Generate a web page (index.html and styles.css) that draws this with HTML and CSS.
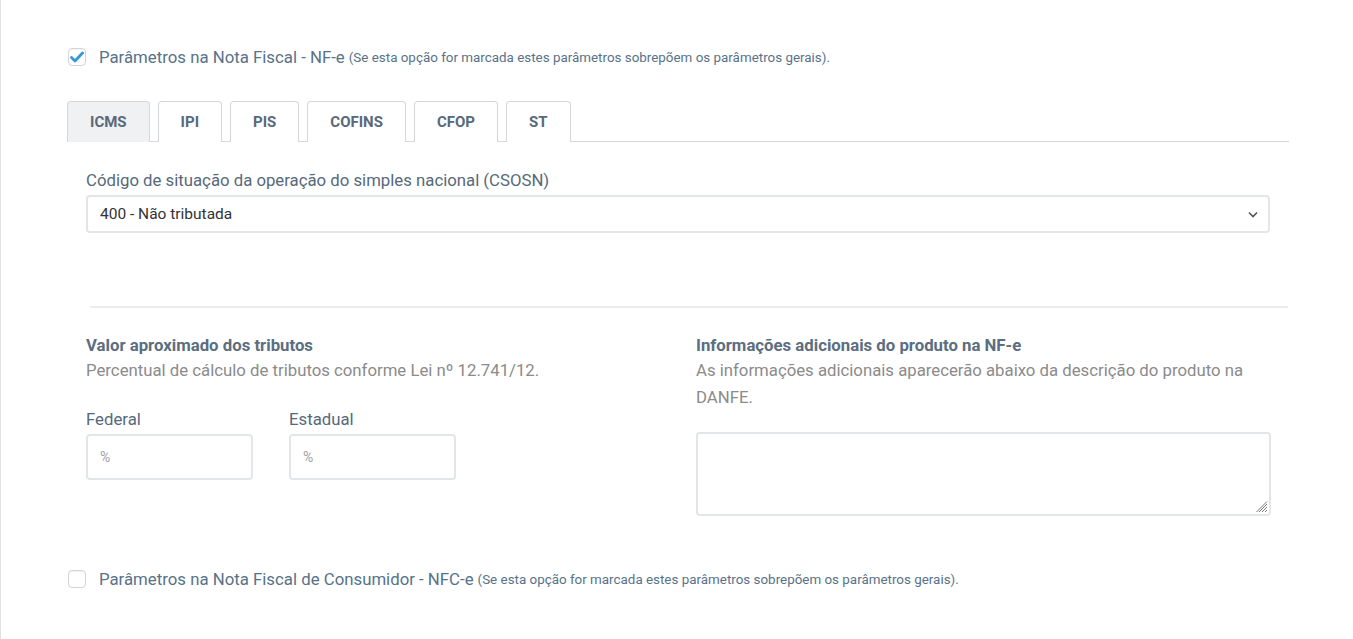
FILE: index.html
```html
<!DOCTYPE html>
<html lang="pt-BR">
<head>
    <meta charset="UTF-8">
    <meta name="viewport" content="width=device-width, initial-scale=1.0">
    <title>Parâmetros fiscais</title>
    <link rel="stylesheet" href="styles.css">
</head>
<body>
    <div class="page">
        <label class="check-row">
            <span class="checkbox checked">
                <svg width="14" height="12" viewBox="0 0 14 12"><path d="M1.5 6.5 L5 10 L12.5 2" fill="none" stroke="#3597d8" stroke-width="2.8" stroke-linecap="round" stroke-linejoin="round"/></svg>
            </span>
            <span class="check-text">Parâmetros na Nota Fiscal - NF-e</span>
            <small class="check-hint">(Se esta opção for marcada estes parâmetros sobrepõem os parâmetros gerais).</small>
        </label>

        <div class="tabs">
            <div class="tab active">ICMS</div>
            <div class="tab">IPI</div>
            <div class="tab">PIS</div>
            <div class="tab">COFINS</div>
            <div class="tab">CFOP</div>
            <div class="tab">ST</div>
        </div>

        <div class="tab-body">
            <div class="field">
                <label class="field-label">Código de situação da operação do simples nacional (CSOSN)</label>
                <div class="select">
                    <span>400 - Não tributada</span>
                    <svg width="10" height="7" viewBox="0 0 10 7"><path d="M1 1.5 L5 5.5 L9 1.5" fill="none" stroke="#555" stroke-width="1.6"/></svg>
                </div>
            </div>
        </div>

        <hr class="divider">

        <div class="cols">
            <div class="col">
                <h4 class="sec-title">Valor aproximado dos tributos</h4>
                <p class="sec-desc">Percentual de cálculo de tributos conforme Lei nº 12.741/12.</p>
                <div class="pct-row">
                    <div class="pct">
                        <label class="field-label">Federal</label>
                        <input type="text" class="txt" placeholder="%">
                    </div>
                    <div class="pct">
                        <label class="field-label">Estadual</label>
                        <input type="text" class="txt" placeholder="%">
                    </div>
                </div>
            </div>
            <div class="col">
                <h4 class="sec-title">Informações adicionais do produto na NF-e</h4>
                <p class="sec-desc">As informações adicionais aparecerão abaixo da descrição do produto na DANFE.</p>
                <div class="area-wrap">
                    <textarea class="area"></textarea>
                    <svg class="grip" width="12" height="12" viewBox="0 0 12 12"><path d="M11 3 L3 11 M11 6 L6 11 M11 9 L9 11 M11 0.5 L0.5 11" stroke="#777" stroke-width="1"/></svg>
                </div>
            </div>
        </div>

        <label class="check-row bottom">
            <span class="checkbox"></span>
            <span class="check-text">Parâmetros na Nota Fiscal de Consumidor - NFC-e</span>
            <small class="check-hint">(Se esta opção for marcada estes parâmetros sobrepõem os parâmetros gerais).</small>
        </label>
    </div>
</body>
</html>
```

FILE: styles.css
```css
body{
    margin: 0;
    font-family: Roboto, "Noto Sans", Arial, sans-serif;
    background: #fff;
    color: #5d6f80;
}
.page{
    border-left: 1px solid #e2e2e2;
    min-height: 639px;
    box-sizing: border-box;
    padding: 48px 64px 0 66px;
}
.check-row{
    display: flex;
    align-items: center;
    gap: 13px;
    height: 18px;
    margin-left: 1px;
}
.checkbox{
    width: 18px;
    height: 18px;
    box-sizing: border-box;
    border: 1px solid #d2d4d7;
    border-radius: 4px;
    display: flex;
    align-items: center;
    justify-content: center;
    background: #fff;
    box-shadow: inset 0 1px 1px rgb(0 0 0 / 5%);
}
.check-text{
    font-size: 16.8px;
    color: #587288;
}
.check-hint{
    font-size: 13.4px;
    color: #587288;
    margin-left: -9px;
}
.tabs{
    display: flex;
    gap: 8px;
    margin-top: 35px;
    border-bottom: 1px solid #d6d6d6;
}
.tab{
    height: 40px;
    line-height: 40px;
    padding: 0 22px;
    border: 1px solid #d6d6d6;
    border-bottom: none;
    border-radius: 4px 4px 0 0;
    font-size: 15px;
    font-weight: 700;
    color: #58697b;
    background: #fff;
    margin-bottom: -1px;
}
.tab.active{
    background: #f0f1f3;
}
.tab-body{
    padding: 28px 19px 0 19px;
}
.field-label{
    display: block;
    font-size: 16.75px;
    color: #56697b;
    margin-bottom: 5px;
}
.select{
    height: 38px;
    box-sizing: border-box;
    border: 2px solid #e3e6e9;
    border-radius: 4px;
    display: flex;
    align-items: center;
    justify-content: space-between;
    padding: 0 10px 0 12px;
    font-size: 15.5px;
    color: #333;
}
.divider{
    border: 0;
    border-top: 2px solid #ededed;
    margin: 73px 1px 0 23px;
}
.cols{
    display: grid;
    grid-template-columns: 574px 575px;
    column-gap: 36px;
    padding: 25px 0 0 19px;
}
.sec-title{
    margin: 0;
    font-size: 16.75px;
    font-weight: 700;
    color: #5b6e80;
    line-height: 24px;
}
.sec-desc{
    margin: 0;
    font-size: 16.75px;
    color: #8b8b8b;
    line-height: 27px;
}
.pct-row{
    display: flex;
    gap: 36px;
    margin-top: 25px;
}
.txt{
    width: 167px;
    height: 46px;
    box-sizing: border-box;
    border: 2px solid #e3e6e9;
    border-radius: 4px;
    padding: 0 12px;
    font-family: inherit;
    font-size: 14px;
    outline: 0;
}
.txt::placeholder{
    color: #a0a0a0;
}
.area-wrap{
    position: relative;
    margin-top: 21px;
}
.area{
    display: block;
    width: 575px;
    height: 84px;
    box-sizing: border-box;
    border: 2px solid #e3e6e9;
    border-radius: 4px;
    resize: none;
    font-family: inherit;
}
.grip{
    position: absolute;
    right: 3px;
    bottom: 3px;
}
.check-row.bottom{
    margin-top: 54px;
}
```
